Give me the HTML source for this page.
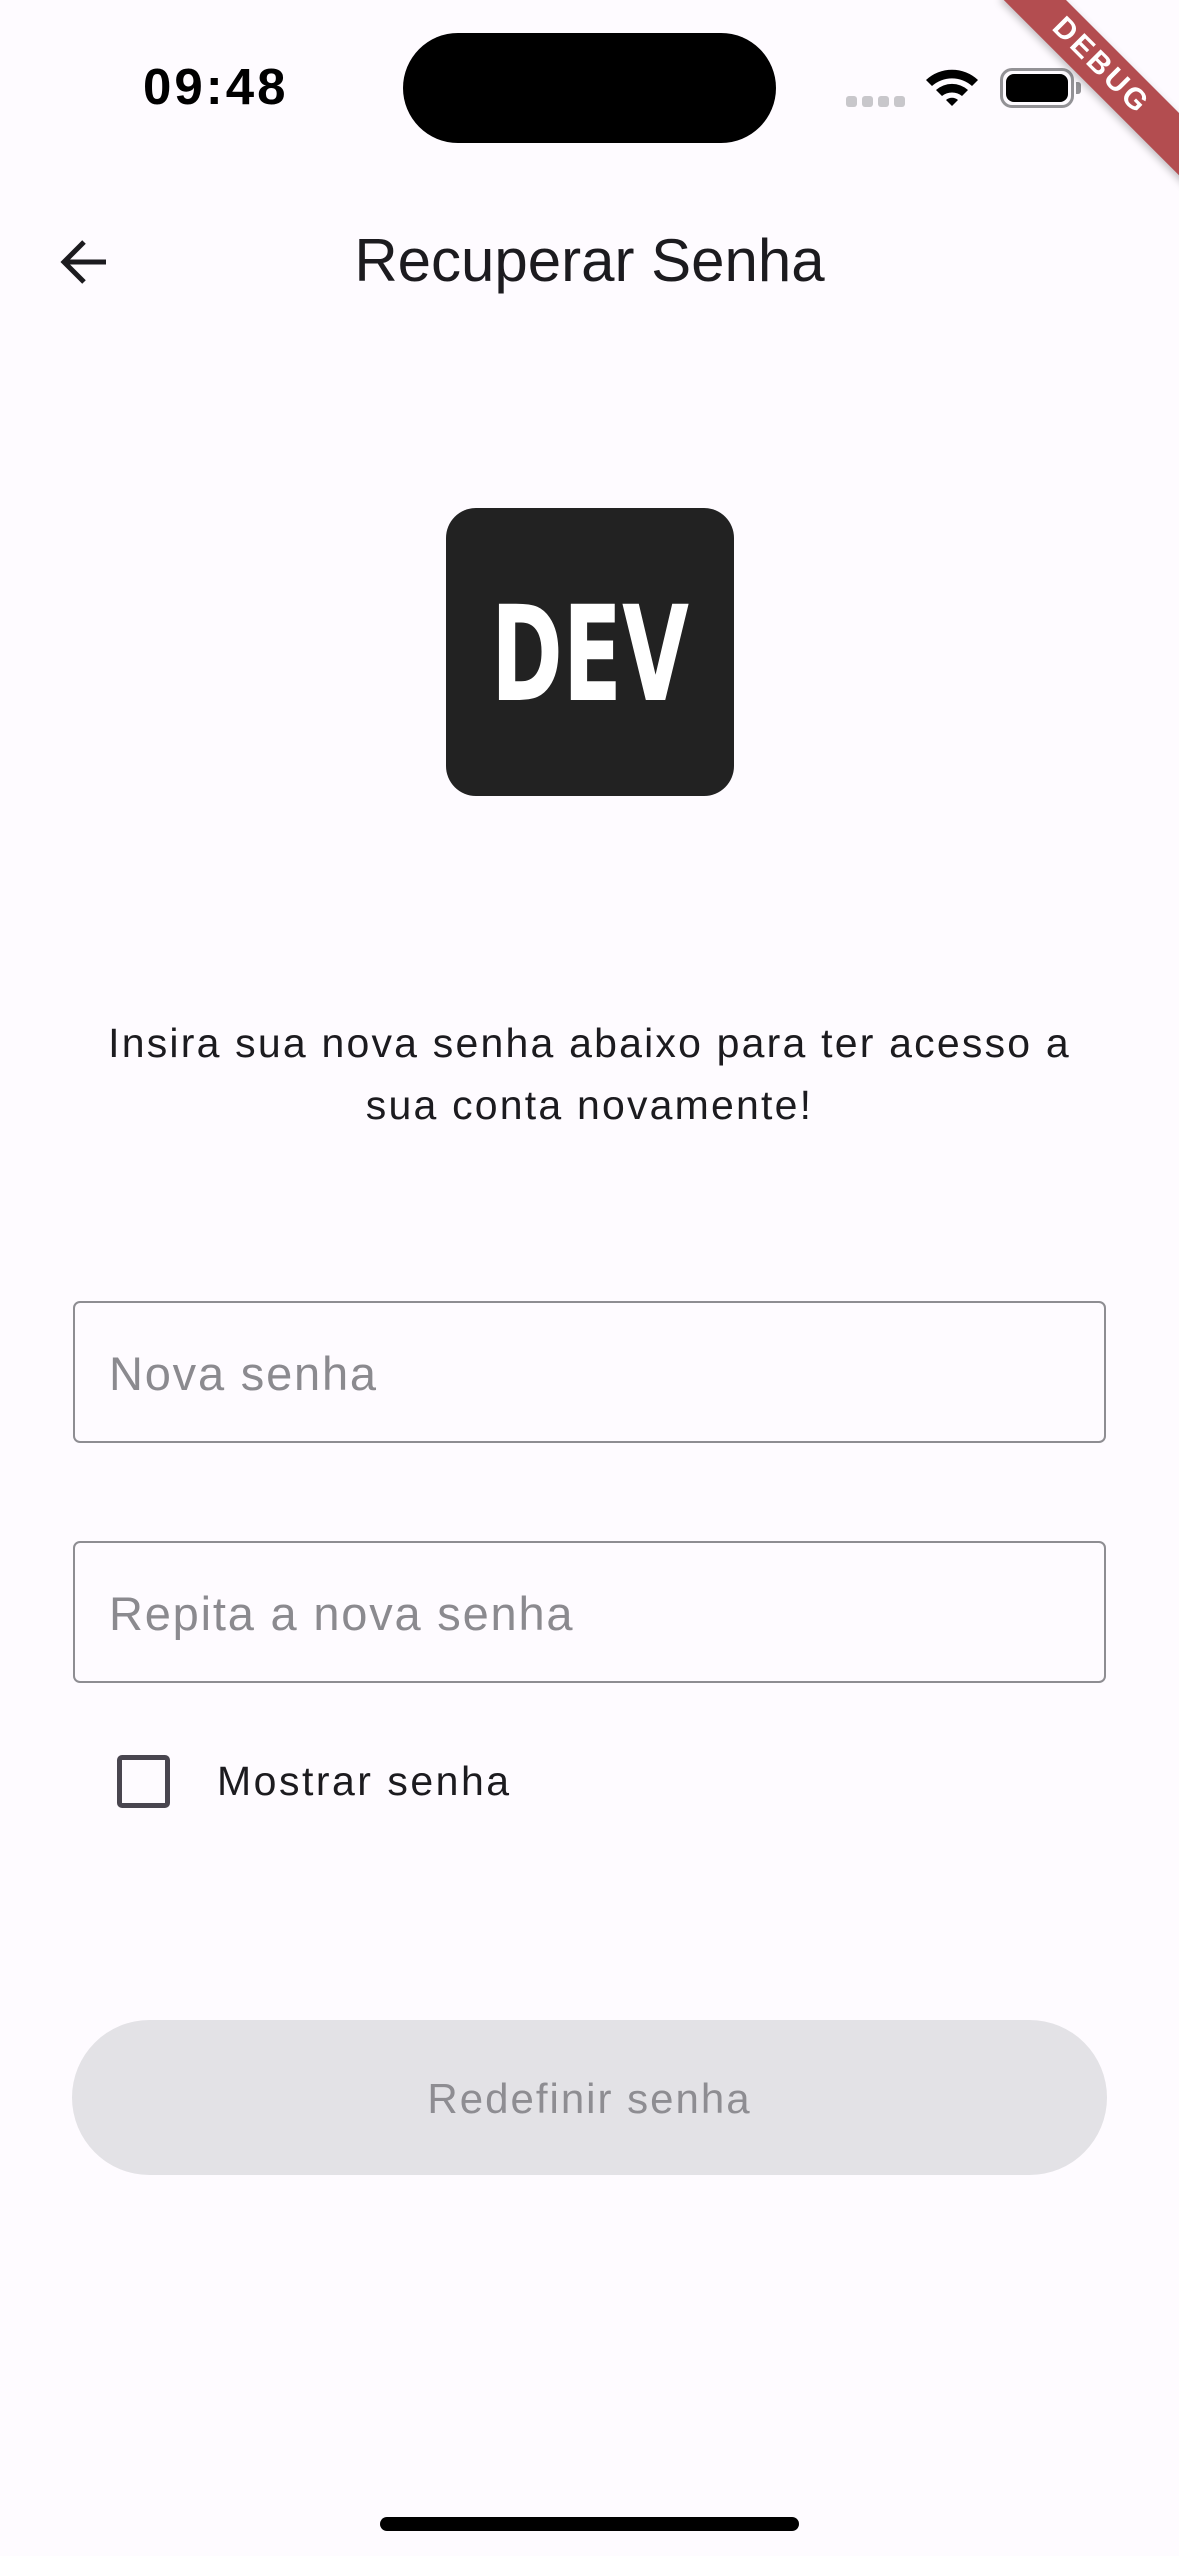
<!DOCTYPE html>
<html><head><meta charset="utf-8"><style>
*{margin:0;padding:0;box-sizing:border-box}
body{width:1179px;height:2556px;background:#fefbff;font-family:"Liberation Sans",sans-serif;position:relative;overflow:hidden;color:#1c1b1f}
.a{position:absolute}
.field{position:absolute;left:73px;width:1033px;height:142px;border:2.5px solid #8e8d92;border-radius:7px}
.field span{position:absolute;left:34px;top:2px;line-height:137px;font-size:47px;color:#8b8a8f;letter-spacing:1.8px}
</style></head><body>
<div class="a" style="left:143px;top:57px;font-size:51px;font-weight:bold;color:#000;letter-spacing:3px">09:48</div>
<div class="a" style="left:403px;top:33px;width:373px;height:110px;background:#000;border-radius:55px"></div>
<div class="a" style="left:846px;top:96px;width:11px;height:11px;border-radius:3px;background:#c8c7cb"></div>
<div class="a" style="left:862px;top:96px;width:11px;height:11px;border-radius:3px;background:#c8c7cb"></div>
<div class="a" style="left:878px;top:96px;width:11px;height:11px;border-radius:3px;background:#c8c7cb"></div>
<div class="a" style="left:894px;top:96px;width:11px;height:11px;border-radius:3px;background:#c8c7cb"></div>
<svg class="a" style="left:924px;top:66px" width="56" height="42" viewBox="0 0 56 42"><path d="M2 14 A38 38 0 0 1 54 14 L48 20 A30 30 0 0 0 8 20 Z" fill="#000"/><path d="M12 24 A24 24 0 0 1 44 24 L38 30 A16 16 0 0 0 18 30 Z" fill="#000"/><path d="M22 34 A9 9 0 0 1 34 34 L28 40 Z" fill="#000"/></svg>
<div class="a" style="left:1000px;top:68px;width:74px;height:40px;border:3px solid #939296;border-radius:12px;padding:3px"><div style="width:100%;height:100%;background:#000;border-radius:8px"></div></div>
<div class="a" style="left:1076px;top:82px;width:5px;height:12px;background:#939296;border-radius:0 3px 3px 0"></div>
<div class="a" style="width:300px;height:44px;background:#b34d50;transform:rotate(45deg);transform-origin:0 0;box-shadow:0 3px 8px rgba(0,0,0,.25);color:#fff;font-weight:bold;font-size:30px;text-align:center;line-height:44px;letter-spacing:3px;left:1033px;top:-33px"><span style="position:relative;left:-32px">DEBUG</span></div>
<svg class="a" style="left:58px;top:236px" width="52" height="52" viewBox="0 0 52 52"><path d="M48 26H8M26 6L6 26l20 20" stroke="#1c1b1f" stroke-width="5" fill="none"/></svg>
<div class="a" style="left:0;width:1179px;top:226px;text-align:center;font-size:60px;line-height:70px">Recuperar Senha</div>
<div class="a" style="left:446px;top:508px;width:288px;height:288px;background:#222;border-radius:30px"></div>
<svg class="a" style="left:446px;top:508px" width="288" height="288"><text x="144" y="192" text-anchor="middle" font-family="DejaVu Sans Condensed,DejaVu Sans,sans-serif" font-weight="bold" font-size="132" fill="#fff" textLength="198" lengthAdjust="spacingAndGlyphs">DEV</text></svg>
<div class="a" style="left:0;width:1179px;top:1012px;text-align:center;font-size:41px;line-height:62px;letter-spacing:2.2px">Insira sua nova senha abaixo para ter acesso a<br>sua conta novamente!</div>
<div class="field" style="top:1301px"><span>Nova senha</span></div>
<div class="field" style="top:1541px"><span>Repita a nova senha</span></div>
<div class="a" style="left:117px;top:1755px;width:53px;height:53px;border:5px solid #49454f;border-radius:5px"></div>
<div class="a" style="left:217px;top:1755px;font-size:41px;line-height:52px;letter-spacing:2.5px">Mostrar senha</div>
<div class="a" style="left:72px;top:2020px;width:1035px;height:155px;background:#e3e2e6;border-radius:78px;text-align:center;line-height:158px;font-size:42px;color:#8e8d92;letter-spacing:2px">Redefinir senha</div>
<div class="a" style="left:380px;top:2517px;width:419px;height:14px;background:#000;border-radius:7px"></div>
</body></html>
